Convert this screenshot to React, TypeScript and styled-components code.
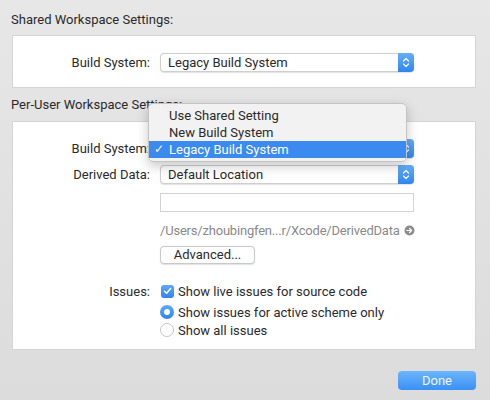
import React from 'react';
import styled, { createGlobalStyle } from 'styled-components';

const GlobalStyle = createGlobalStyle`
  html, body {
    margin: 0;
    padding: 0;
  }
  body {
    font-family: Roboto, "Noto Sans", sans-serif;
    font-size: 13px;
    color: #2a2a2a;
  }
`;

const Window = styled.div`
  width: 490px;
  height: 400px;
  box-sizing: border-box;
  padding: 12px 14px 0 12px;
  background: linear-gradient(180deg, #e7e7e7 0%, #e0e0e0 60%, #dcdcdc 100%);
  display: flex;
  flex-direction: column;
  overflow: hidden;
`;

const SectionTitle = styled.div<{ $top?: number }>`
  margin-left: -1px;
  margin-top: ${(p) => p.$top || 0}px;
  height: 16px;
  line-height: 16px;
  white-space: nowrap;
`;

const Panel = styled.div<{ $height: number; $padTop: number; $top: number }>`
  box-sizing: border-box;
  height: ${(p) => p.$height}px;
  margin-top: ${(p) => p.$top}px;
  padding-top: ${(p) => p.$padTop}px;
  background: #ffffff;
  border: 1px solid #d5d5d5;
  display: flex;
  flex-direction: column;
`;

const Row = styled.div<{ $top?: number; $height?: number }>`
  display: flex;
  align-items: center;
  margin-top: ${(p) => p.$top || 0}px;
  height: ${(p) => p.$height || 19}px;
`;

const Label = styled.div`
  width: 137px;
  margin-right: 10px;
  flex-shrink: 0;
  text-align: right;
  white-space: nowrap;
`;

const PopupWrap = styled.div`
  position: relative;
  width: 254px;
  height: 19px;
`;

const PopupBox = styled.div`
  box-sizing: border-box;
  width: 100%;
  height: 100%;
  background: #ffffff;
  border: 1px solid #cfcfcf;
  border-radius: 4px;
  box-shadow: 0 0.5px 1px rgba(0, 0, 0, 0.12);
  display: flex;
  align-items: center;
  padding-left: 7px;
  line-height: 17px;
`;

const Stepper = styled.div`
  position: absolute;
  right: 0;
  top: 0;
  width: 16px;
  height: 19px;
  border-radius: 0 4px 4px 0;
  background: linear-gradient(180deg, #66aefa 0%, #2f85ef 100%);
  display: flex;
  align-items: center;
  justify-content: center;
`;

const Menu = styled.div`
  position: absolute;
  left: -12px;
  top: -36px;
  width: 259px;
  box-sizing: border-box;
  padding: 3px 0;
  background: rgba(242, 242, 242, 0.98);
  border: 0.5px solid #c4c4c4;
  border-radius: 5px;
  box-shadow: 0 4px 12px rgba(0, 0, 0, 0.22);
  z-index: 2;
`;

const MenuItem = styled.div<{ $selected?: boolean }>`
  position: relative;
  height: 17px;
  line-height: 17px;
  padding-left: 20px;
  background: ${(p) => (p.$selected ? '#3b8af0' : 'transparent')};
  color: ${(p) => (p.$selected ? '#ffffff' : '#2a2a2a')};
`;

const Check = styled.span`
  position: absolute;
  left: 5px;
  top: 0;
  font-family: "DejaVu Sans", sans-serif;
  font-size: 12px;
`;

const TextField = styled.div`
  box-sizing: border-box;
  width: 254px;
  height: 19px;
  background: #ffffff;
  border: 1px solid #d3d3d3;
`;

const PathText = styled.div`
  display: flex;
  align-items: center;
  gap: 4px;
  color: #8a8a8a;
  letter-spacing: -0.2px;
  white-space: nowrap;
`;

const PushButton = styled.div`
  box-sizing: border-box;
  width: 95px;
  height: 18px;
  line-height: 16px;
  background: #ffffff;
  border: 1px solid #c9c9c9;
  border-radius: 4px;
  box-shadow: 0 0.5px 1px rgba(0, 0, 0, 0.12);
  text-align: center;
`;

const Option = styled.div`
  display: flex;
  align-items: center;
  white-space: nowrap;
`;

const CheckBox = styled.div`
  width: 13px;
  height: 13px;
  margin-left: 1px;
  margin-right: 4px;
  border-radius: 3px;
  background: linear-gradient(180deg, #5ea8f9 0%, #2f86f0 100%);
  display: flex;
  align-items: center;
  justify-content: center;
`;

const Radio = styled.div<{ $on?: boolean }>`
  box-sizing: border-box;
  width: 14px;
  height: 14px;
  margin-right: 4px;
  border-radius: 50%;
  background: ${(p) => (p.$on ? 'linear-gradient(180deg, #5ea8f9 0%, #2f86f0 100%)' : '#ffffff')};
  border: ${(p) => (p.$on ? 'none' : '1px solid #c6c6c6')};
  display: flex;
  align-items: center;
  justify-content: center;

  &::after {
    content: '';
    display: ${(p) => (p.$on ? 'block' : 'none')};
    width: 6px;
    height: 6px;
    border-radius: 50%;
    background: #ffffff;
  }
`;

const DoneButton = styled.div`
  align-self: flex-end;
  margin-top: 21px;
  width: 78px;
  height: 19px;
  line-height: 19px;
  border-radius: 4px;
  background: linear-gradient(180deg, #6db5fb 0%, #3a90f5 100%);
  color: #f0f7ff;
  text-align: center;
`;

const Chevrons = () => (
  <svg width="8" height="13" viewBox="0 0 8 13">
    <path d="M1.5 5 L4 2.5 L6.5 5 M1.5 8 L4 10.5 L6.5 8" fill="none" stroke="#ffffff" strokeWidth="1.2" strokeLinecap="round" strokeLinejoin="round" />
  </svg>
);

const Popup: React.FC<{ value: string; children?: React.ReactNode }> = ({ value, children }) => (
  <PopupWrap>
    <PopupBox>{value}</PopupBox>
    <Stepper>
      <Chevrons />
    </Stepper>
    {children}
  </PopupWrap>
);

const RevealIcon = () => (
  <svg width="11" height="11" viewBox="0 0 11 11">
    <circle cx="5.5" cy="5.5" r="5" fill="#8c8c8c" />
    <path d="M2.8 5.5 H7.6 M5.6 3.5 L7.6 5.5 L5.6 7.5" fill="none" stroke="#ffffff" strokeWidth="1.2" strokeLinecap="round" strokeLinejoin="round" />
  </svg>
);

const TickMark = () => (
  <svg width="9" height="8" viewBox="0 0 9 8">
    <path d="M1.5 4.2 L3.6 6.3 L7.6 1.5" fill="none" stroke="#ffffff" strokeWidth="1.5" strokeLinecap="round" strokeLinejoin="round" />
  </svg>
);

export default function App() {
  return (
    <>
      <GlobalStyle />
      <Window>
        <SectionTitle>Shared Workspace Settings:</SectionTitle>
        <Panel $top={7} $height={53} $padTop={17}>
          <Row>
            <Label>Build System:</Label>
            <Popup value="Legacy Build System" />
          </Row>
        </Panel>
        <SectionTitle $top={9}>Per-User Workspace Settings:</SectionTitle>
        <Panel $top={8} $height={229} $padTop={17}>
          <Row>
            <Label>Build System:</Label>
            <Popup value="Legacy Build System">
              <Menu>
                <MenuItem>Use Shared Setting</MenuItem>
                <MenuItem>New Build System</MenuItem>
                <MenuItem $selected>
                  <Check>✓</Check>
                  Legacy Build System
                </MenuItem>
              </Menu>
            </Popup>
          </Row>
          <Row $top={7}>
            <Label>Derived Data:</Label>
            <Popup value="Default Location" />
          </Row>
          <Row $top={9}>
            <Label />
            <TextField />
          </Row>
          <Row $top={10} $height={16}>
            <Label />
            <PathText>
              /Users/zhoubingfen...r/Xcode/DerivedData
              <RevealIcon />
            </PathText>
          </Row>
          <Row $top={8} $height={18}>
            <Label />
            <PushButton>Advanced...</PushButton>
          </Row>
          <Row $top={18} $height={18}>
            <Label>Issues:</Label>
            <Option>
              <CheckBox>
                <TickMark />
              </CheckBox>
              Show live issues for source code
            </Option>
          </Row>
          <Row $top={3} $height={18}>
            <Label />
            <Option>
              <Radio $on />
              Show issues for active scheme only
            </Option>
          </Row>
          <Row $height={18}>
            <Label />
            <Option>
              <Radio />
              Show all issues
            </Option>
          </Row>
        </Panel>
        <DoneButton>Done</DoneButton>
      </Window>
    </>
  );
}
